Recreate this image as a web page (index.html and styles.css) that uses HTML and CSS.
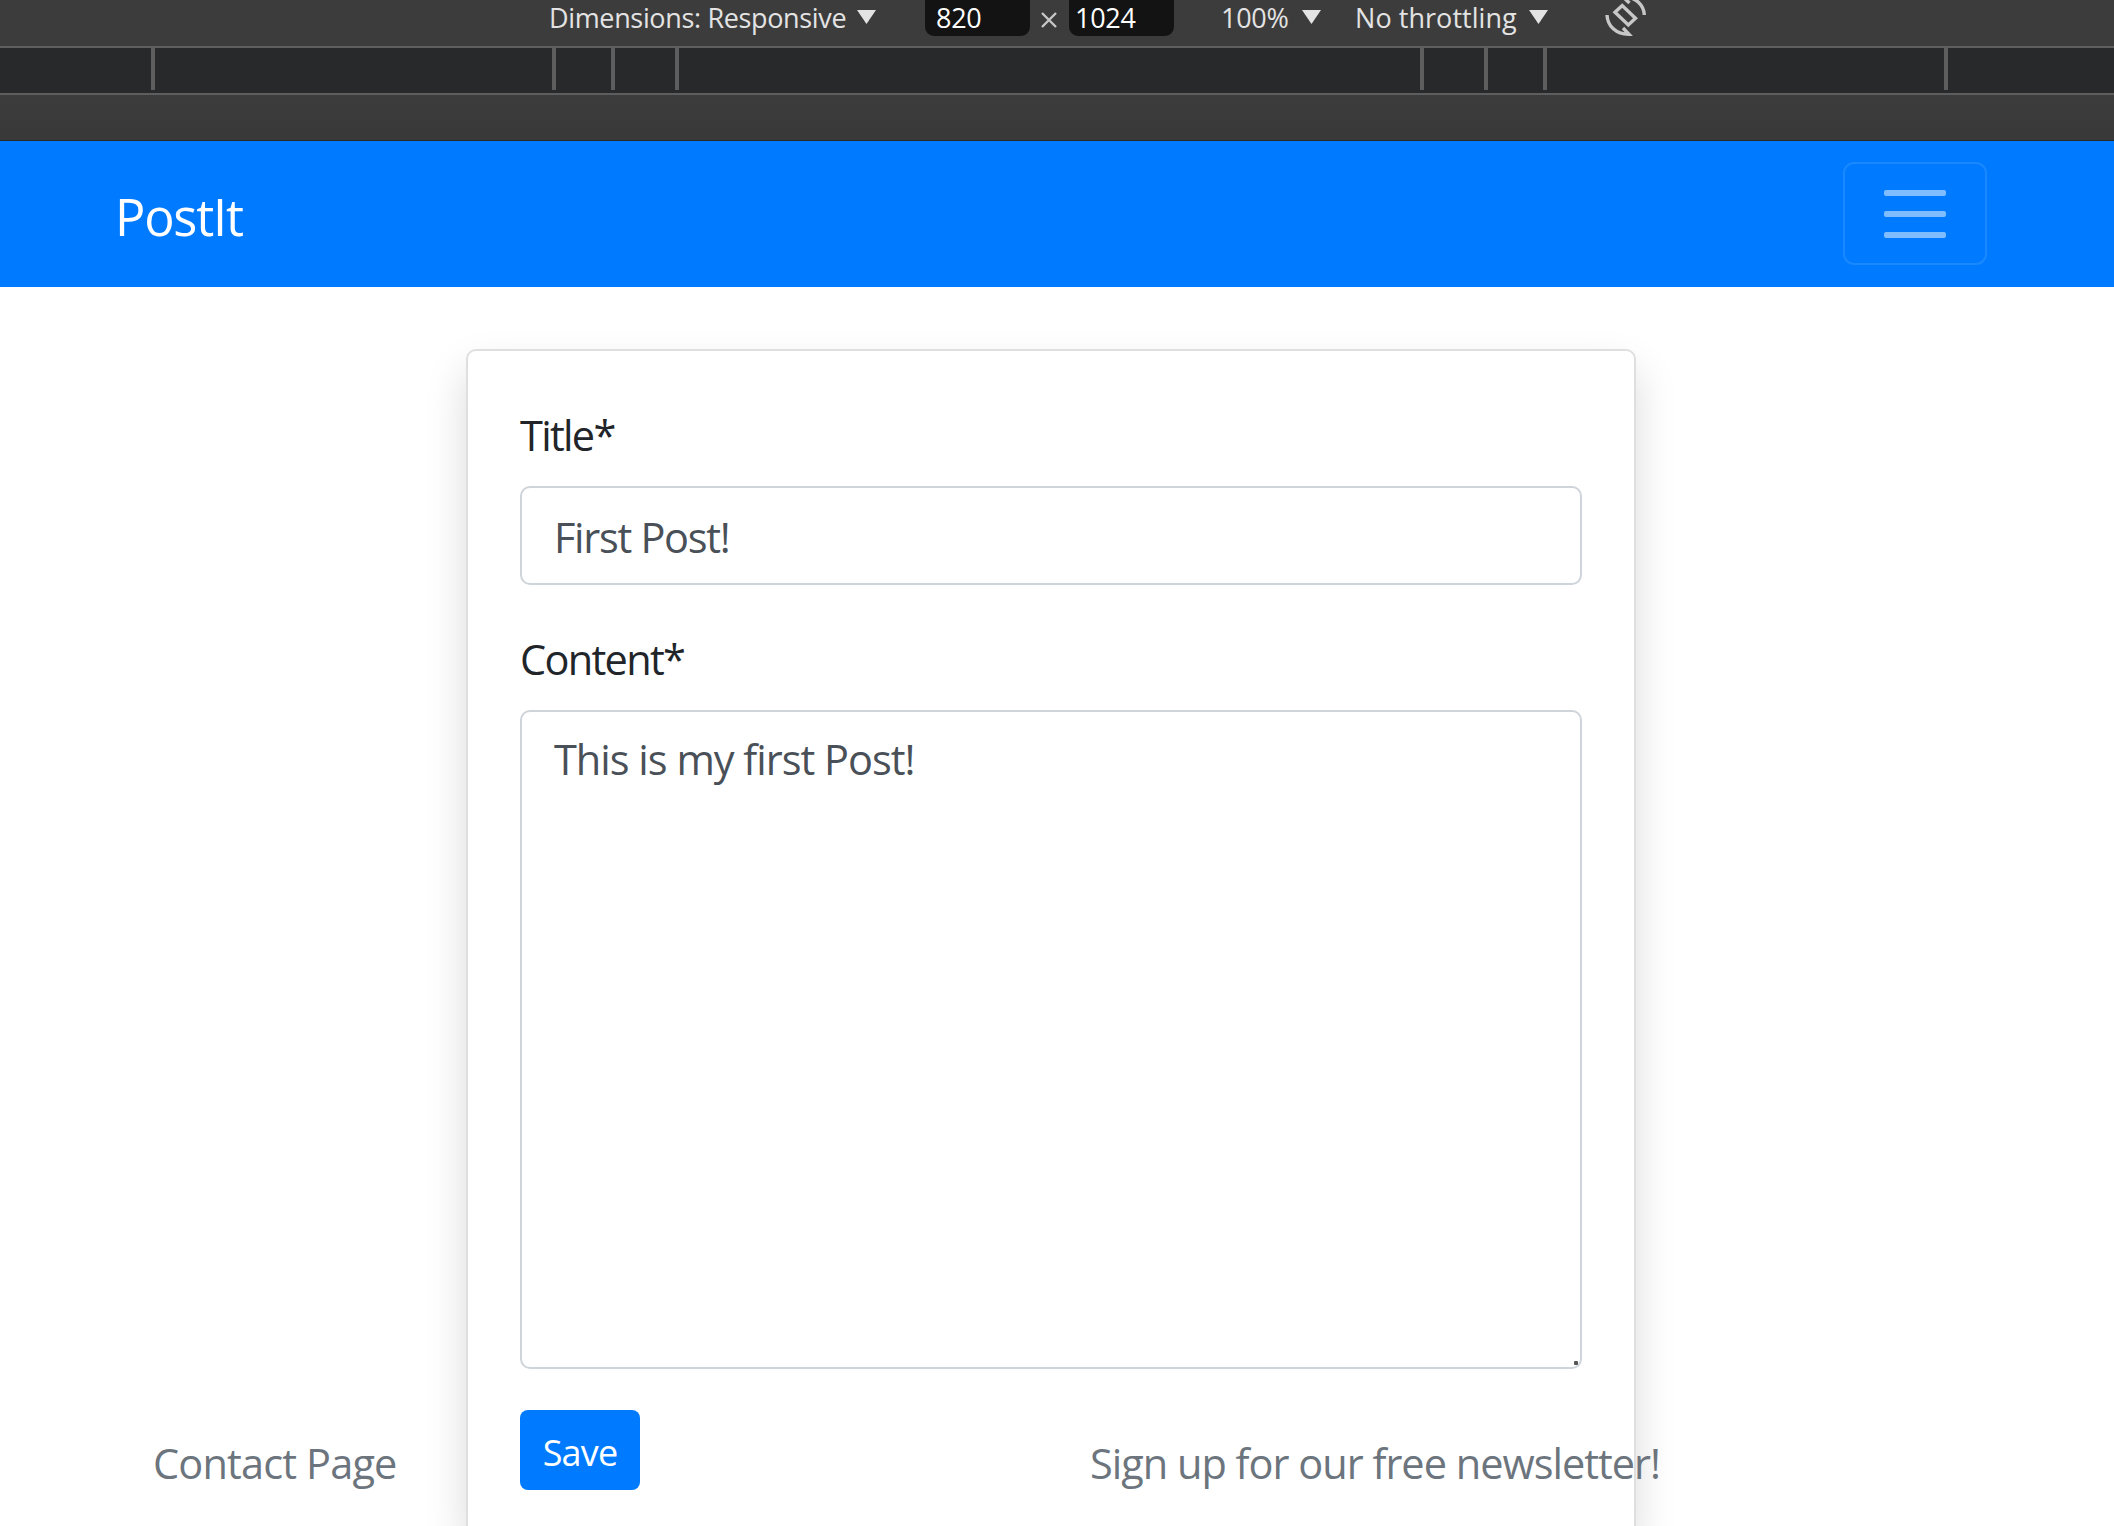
FILE: index.html
```html
<!DOCTYPE html>
<html lang="en">
<head>
<meta charset="utf-8">
<title>PostIt</title>
<link rel="stylesheet" href="styles.css">
</head>
<body>
<div class="toolbar">
  <span class="dimensions">Dimensions: Responsive</span>
  <i class="caret"></i>
  <span class="size-field size-width">820</span>
  <svg class="times" width="16" height="16" viewBox="0 0 16 16"><path d="M1 1 15 15M15 1 1 15"/></svg>
  <span class="size-field size-height">1024</span>
  <span class="zoom">100%</span>
  <i class="caret"></i>
  <span class="throttling">No throttling</span>
  <i class="caret"></i>
  <svg class="rotate" width="42" height="42" viewBox="0 0 42 42">
    <path d="M10 17.300 17.200 10.500 30.500 23.200 23.300 30Z"/>
    <path d="M2 20C2.500 31 11 39.500 24 39.300L18 33"/>
    <path d="M39.300 20C39 10.500 31 1.500 18 2L24.500 8"/>
  </svg>
</div>
<div class="media-bar">
  <i class="tick t1"></i><i class="tick t2"></i><i class="tick t3"></i><i class="tick t4"></i>
  <i class="tick t5"></i><i class="tick t6"></i><i class="tick t7"></i><i class="tick t8"></i>
</div>
<div class="gutter"></div>
<nav class="navbar">
  <a class="brand">PostIt</a>
  <button class="toggler" aria-label="Toggle navigation"><i></i><i></i><i></i></button>
</nav>
<main class="page">
  <form class="card">
    <label class="label label-title" for="title">Title*</label>
    <input class="control" id="title" value="First Post!">
    <label class="label label-content" for="content">Content*</label>
    <div class="area-wrap">
      <textarea class="control area" id="content">This is my first Post!</textarea>
      <i class="grip"></i>
    </div>
    <button class="save" type="button">Save</button>
  </form>
</main>
<footer class="footer">
  <span class="contact">Contact Page</span>
  <span class="newsletter">Sign up for our free newsletter!</span>
</footer>
</body>
</html>
```
FILE: styles.css
```css
* { box-sizing: border-box; }
body {
  margin: 0;
  height: 1526px;
  position: relative;
  overflow: hidden;
  display: flex;
  flex-direction: column;
  background: #fff;
  font-family: "Open Sans", "Noto Sans", sans-serif;
  color: #212529;
}
.toolbar {
  flex: none;
  height: 46px;
  display: flex;
  align-items: flex-start;
  padding-left: 549px;
  background: #3c3c3c;
  color: #e3e3e3;
  font-size: 27px;
  line-height: 35px;
  white-space: nowrap;
}
.dimensions { width: 308px; letter-spacing: -0.35px; }
.caret {
  width: 19px;
  height: 14px;
  margin-top: 10px;
  background: #e3e3e3;
  clip-path: polygon(0 0, 100% 0, 50% 100%);
}
.size-field {
  width: 105px;
  height: 36px;
  border-radius: 0 0 9px 9px;
  background: #131313;
  color: #fff;
  letter-spacing: -0.3px;
}
.size-width { margin-left: 49px; padding-left: 11px; }
.size-height { margin-left: 12px; padding-left: 6px; }
.times { margin: 12px 0 0 11px; stroke: #c7c7c7; stroke-width: 2.4; }
.zoom { width: 81px; margin-left: 47px; letter-spacing: -0.3px; }
.throttling { width: 174px; margin-left: 34px; letter-spacing: 0.05px; }
.rotate {
  margin: -5px 0 0 57px;
  fill: none;
  stroke: #c7c7c7;
  stroke-width: 3.4;
}
.media-bar {
  flex: none;
  height: 49px;
  display: flex;
  border-top: 2px solid #5e5e5e;
  border-bottom: 2px solid #5e5e5e;
  background: #28292a;
}
.tick { width: 4px; height: 42px; background: #5e5e5e; }
.t1 { margin-left: 151px; }
.t2 { margin-left: 397px; }
.t3 { margin-left: 55px; }
.t4 { margin-left: 60px; }
.t5 { margin-left: 741px; }
.t6 { margin-left: 60px; }
.t7 { margin-left: 55px; }
.t8 { margin-left: 397px; }
.gutter {
  flex: none;
  height: 46px;
  border-bottom: 1px solid #292929;
  background: linear-gradient(#3c3c3c, #393939);
}
.navbar {
  flex: none;
  height: 146px;
  display: flex;
  justify-content: space-between;
  align-items: center;
  padding: 0 127px 0 115px;
  background: #007bff;
}
.brand {
  color: #fff;
  font-size: 50.5px;
  line-height: 70px;
  padding-top: 5px;
  letter-spacing: -1.2px;
}
.toggler {
  width: 144px;
  height: 103px;
  margin-bottom: 2px;
  padding: 2px 0 0;
  display: flex;
  flex-direction: column;
  align-items: center;
  justify-content: center;
  gap: 15px;
  border: 2px solid rgba(255, 255, 255, .1);
  border-radius: 11px;
  background: none;
}
.toggler i { width: 62px; height: 6px; border-radius: 2px; background: rgba(255, 255, 255, .5); }
.page {
  flex: 1;
  min-height: 0;
  display: flex;
  padding: 62px 478px 0 466px;
}
.card {
  flex: 1;
  padding: 52px 52px 0;
  border: 2px solid #dfdfdf;
  border-bottom: 0;
  border-radius: 10px 10px 0 0;
  background: #fff;
  box-shadow: 0 21px 42px rgba(0, 0, 0, .15);
}
.label {
  display: block;
  height: 62px;
  margin-bottom: 21px;
  font-size: 41.5px;
  line-height: 64px;
}
.label-title { letter-spacing: -1.7px; }
.label-content { margin-top: 42px; letter-spacing: -1.7px; }
.control {
  display: block;
  width: 1062px;
  height: 99px;
  margin: 0;
  padding: 3px 32px 0;
  border: 2px solid #ced4da;
  border-radius: 10px;
  background: #fff;
  color: #495057;
  font-family: inherit;
  font-size: 41.5px;
  line-height: 62px;
  letter-spacing: -1.3px;
  outline: none;
}
.area-wrap { position: relative; }
.area {
  height: 659px;
  padding-top: 16px;
  letter-spacing: -1px;
  resize: none;
  overflow: hidden;
}
.grip {
  position: absolute;
  right: 4px;
  bottom: 4px;
  width: 4px;
  height: 4px;
  border-radius: 1px;
  background: #555;
}
.save {
  display: block;
  width: 120px;
  height: 80px;
  margin: 41px 0 0;
  padding: 4px 0 0;
  border: 0;
  border-radius: 8px;
  background: #007bff;
  color: #fff;
  font-family: inherit;
  font-size: 36px;
  letter-spacing: -0.8px;
}
.footer {
  position: absolute;
  left: 0;
  right: 0;
  bottom: 32px;
  display: flex;
  padding-left: 153px;
  color: #6c757d;
  font-size: 41.5px;
  line-height: 62px;
  white-space: nowrap;
}
.contact { width: 937px; letter-spacing: -0.85px; }
.newsletter { letter-spacing: -1px; }
```
